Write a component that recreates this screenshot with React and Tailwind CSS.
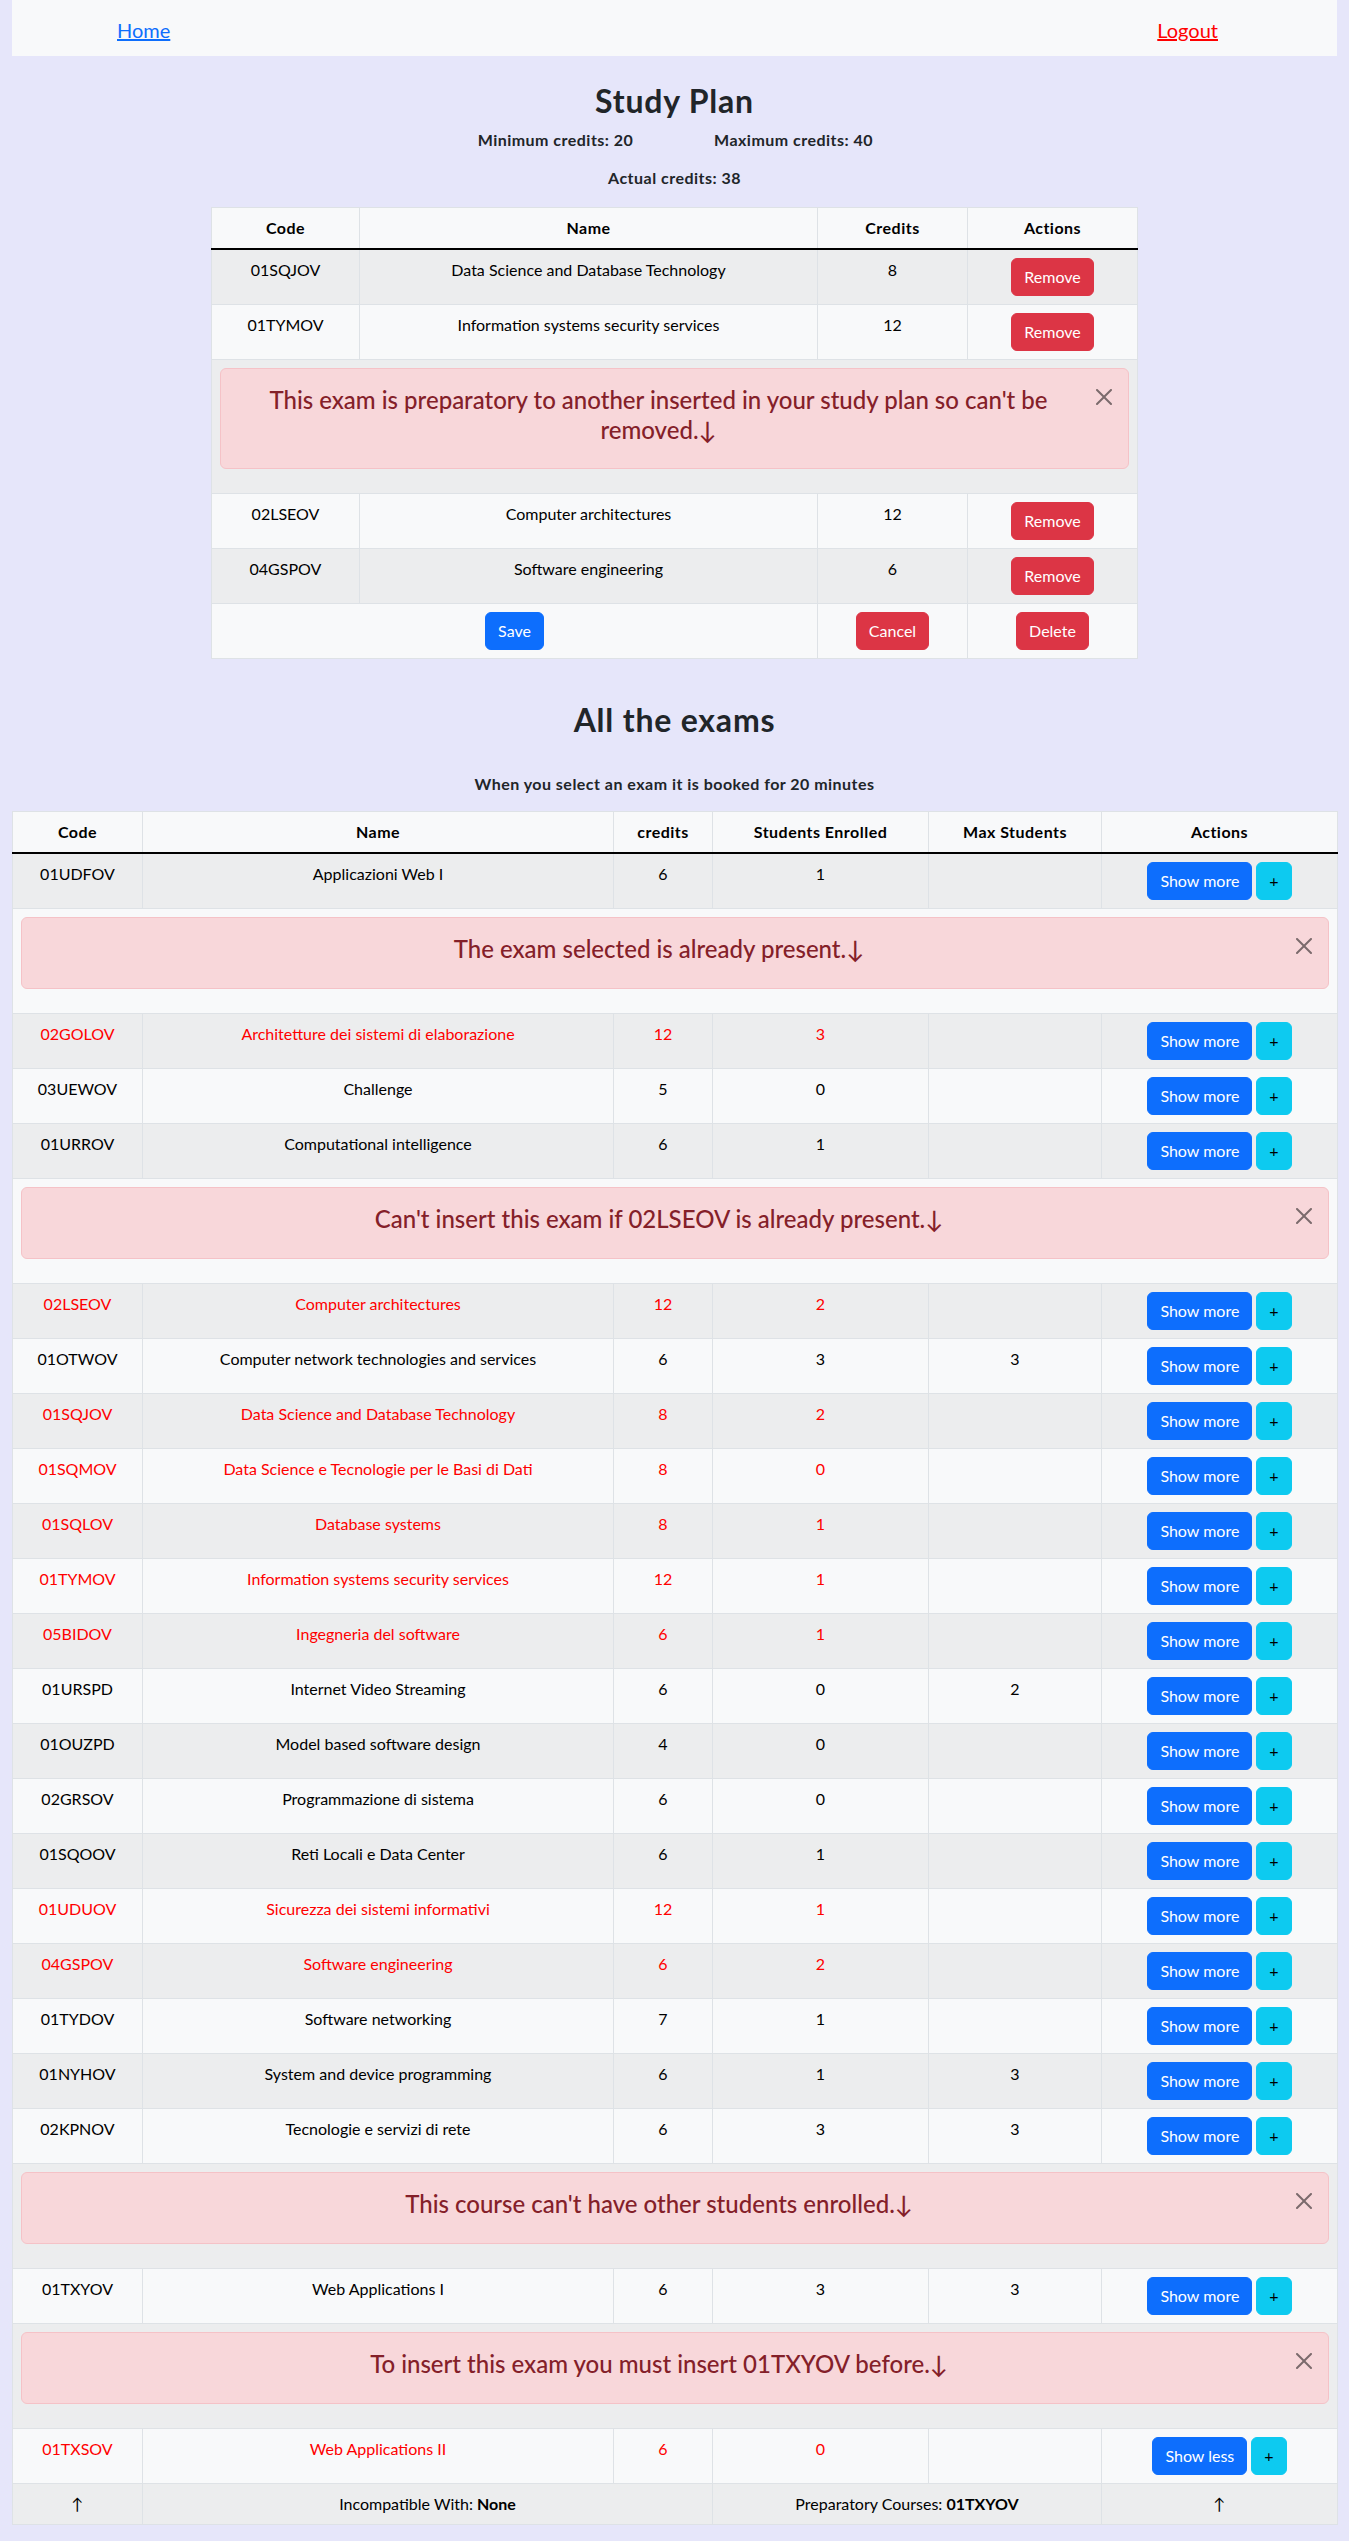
import React from 'react';

const exams = [
  { code: '01UDFOV', name: 'Applicazioni Web I', credits: 6, enrolled: 1, max: '', red: false },
  { alert: 'The exam selected is already present.↓' },
  { code: '02GOLOV', name: 'Architetture dei sistemi di elaborazione', credits: 12, enrolled: 3, max: '', red: true },
  { code: '03UEWOV', name: 'Challenge', credits: 5, enrolled: 0, max: '', red: false },
  { code: '01URROV', name: 'Computational intelligence', credits: 6, enrolled: 1, max: '', red: false },
  { alert: "Can't insert this exam if 02LSEOV is already present.↓" },
  { code: '02LSEOV', name: 'Computer architectures', credits: 12, enrolled: 2, max: '', red: true },
  { code: '01OTWOV', name: 'Computer network technologies and services', credits: 6, enrolled: 3, max: 3, red: false },
  { code: '01SQJOV', name: 'Data Science and Database Technology', credits: 8, enrolled: 2, max: '', red: true },
  { code: '01SQMOV', name: 'Data Science e Tecnologie per le Basi di Dati', credits: 8, enrolled: 0, max: '', red: true },
  { code: '01SQLOV', name: 'Database systems', credits: 8, enrolled: 1, max: '', red: true },
  { code: '01TYMOV', name: 'Information systems security services', credits: 12, enrolled: 1, max: '', red: true },
  { code: '05BIDOV', name: 'Ingegneria del software', credits: 6, enrolled: 1, max: '', red: true },
  { code: '01URSPD', name: 'Internet Video Streaming', credits: 6, enrolled: 0, max: 2, red: false },
  { code: '01OUZPD', name: 'Model based software design', credits: 4, enrolled: 0, max: '', red: false },
  { code: '02GRSOV', name: 'Programmazione di sistema', credits: 6, enrolled: 0, max: '', red: false },
  { code: '01SQOOV', name: 'Reti Locali e Data Center', credits: 6, enrolled: 1, max: '', red: false },
  { code: '01UDUOV', name: 'Sicurezza dei sistemi informativi', credits: 12, enrolled: 1, max: '', red: true },
  { code: '04GSPOV', name: 'Software engineering', credits: 6, enrolled: 2, max: '', red: true },
  { code: '01TYDOV', name: 'Software networking', credits: 7, enrolled: 1, max: '', red: false },
  { code: '01NYHOV', name: 'System and device programming', credits: 6, enrolled: 1, max: 3, red: false },
  { code: '02KPNOV', name: 'Tecnologie e servizi di rete', credits: 6, enrolled: 3, max: 3, red: false },
  { alert: "This course can't have other students enrolled.↓" },
  { code: '01TXYOV', name: 'Web Applications I', credits: 6, enrolled: 3, max: 3, red: false },
  { alert: 'To insert this exam you must insert 01TXYOV before.↓' },
  { code: '01TXSOV', name: 'Web Applications II', credits: 6, enrolled: 0, max: '', red: true, less: true },
];

const plan = [
  { code: '01SQJOV', name: 'Data Science and Database Technology', credits: 8 },
  { code: '01TYMOV', name: 'Information systems security services', credits: 12 },
  { alert: "This exam is preparatory to another inserted in your study plan so can't be removed.↓" },
  { code: '02LSEOV', name: 'Computer architectures', credits: 12 },
  { code: '04GSPOV', name: 'Software engineering', credits: 6 },
];

const rowCls = 'odd:bg-[#ecedee] even:bg-[#f8f9fa]';
const tdCls = 'border border-[#dee2e6] px-2 py-2 text-center align-top text-[16px] leading-6';
const thCls = 'border border-[#dee2e6] border-b-2 border-b-black px-2 py-2 text-center align-top text-[16px] leading-6 font-bold tracking-[0.03em] text-black';

const btnBase = 'inline-block rounded-[6px] border px-3 py-[6px] text-[16px] leading-6 align-top';
const btnPrimary = btnBase + ' border-[#0d6efd] bg-[#0d6efd] text-white';
const btnDanger = btnBase + ' border-[#dc3545] bg-[#dc3545] text-white';
const btnInfo = btnBase + ' border-[#0dcaf0] bg-[#0dcaf0] text-black';

function CloseIcon() {
  return (
    <svg className="block h-4 w-4" viewBox="0 0 16 16">
      <path
        fill="#000"
        d="M.293.293a1 1 0 0 1 1.414 0L8 6.586 14.293.293a1 1 0 1 1 1.414 1.414L9.414 8l6.293 6.293a1 1 0 0 1-1.414 1.414L8 9.414l-6.293 6.293a1 1 0 0 1-1.414-1.414L6.586 8 .293 1.707a1 1 0 0 1 0-1.414z"
      />
    </svg>
  );
}

function Alert({ children, twoLine }) {
  return (
    <div className="relative mb-4 rounded-[6px] border border-[#f5c2c7] bg-[#f8d7da] p-4 pr-12 text-[#842029]">
      <div className={(twoLine ? 'leading-[29.5px]' : 'leading-[30px]') + ' mb-2 text-center text-[24px] font-medium'}>{children}</div>
      <button type="button" className="absolute right-0 top-0 px-4 py-5 opacity-50">
        <CloseIcon />
      </button>
    </div>
  );
}

export default function App() {
  return (
    <div className="min-h-screen bg-[#e6e6fa] px-3 pb-4 font-[Lato,'Liberation_Sans',sans-serif] text-[16px] leading-6 text-[#212529]">
      <nav className="flex h-[56px] items-center justify-between bg-[#f8f9fa] pl-[105px] pr-[119px] pt-[3px]">
        <a href="#" className="text-[20px] leading-[30px] text-[#0d6efd] underline">Home</a>
        <a href="#" className="text-[20px] leading-[30px] text-[#ff0000] underline">Logout</a>
      </nav>

      <h2 className="mt-[26px] text-center text-[32px] font-bold leading-[1.2] tracking-[0.025em] text-[#212529]">Study Plan</h2>
      <div className="mt-[8px] flex justify-center font-bold tracking-[0.03em]">
        <div className="w-[238px] text-center">Minimum credits: 20</div>
        <div className="w-[238px] text-center">Maximum credits: 40</div>
      </div>
      <div className="mt-[14px] text-center font-bold tracking-[0.03em]">Actual credits: 38</div>

      <table className="mx-auto mt-[17px] w-[926px] table-fixed border-collapse border border-[#dee2e6] text-black">
        <colgroup>
          <col className="w-[148px]" />
          <col className="w-[458px]" />
          <col className="w-[150px]" />
          <col className="w-[170px]" />
        </colgroup>
        <thead>
          <tr className="bg-[#f8f9fa]">
            <th className={thCls}>Code</th>
            <th className={thCls}>Name</th>
            <th className={thCls}>Credits</th>
            <th className={thCls}>Actions</th>
          </tr>
        </thead>
        <tbody>
          {plan.map((p, i) =>
            p.alert ? (
              <tr key={i} className={rowCls}>
                <td colSpan={4} className="border border-[#dee2e6] px-2 pb-2 pt-2">
                  <Alert twoLine>{p.alert}</Alert>
                </td>
              </tr>
            ) : (
              <tr key={i} className={rowCls}>
                <td className={tdCls}>{p.code}</td>
                <td className={tdCls}>{p.name}</td>
                <td className={tdCls}>{p.credits}</td>
                <td className={tdCls}>
                  <button type="button" className={btnDanger}>Remove</button>
                </td>
              </tr>
            )
          )}
          <tr className={rowCls}>
            <td colSpan={2} className={tdCls}>
              <button type="button" className={btnPrimary}>Save</button>
            </td>
            <td className={tdCls}>
              <button type="button" className={btnDanger}>Cancel</button>
            </td>
            <td className={tdCls}>
              <button type="button" className={btnDanger}>Delete</button>
            </td>
          </tr>
        </tbody>
      </table>

      <h2 className="mt-[42px] text-center text-[32px] font-bold leading-[1.2] tracking-[0.025em] text-[#212529]">All the exams</h2>
      <div className="mt-[32px] text-center font-bold tracking-[0.03em]">When you select an exam it is booked for 20 minutes</div>

      <table className="mt-[15px] w-full table-fixed border-collapse border border-[#dee2e6] text-black">
        <colgroup>
          <col className="w-[130px]" />
          <col className="w-[471px]" />
          <col className="w-[99px]" />
          <col className="w-[216px]" />
          <col className="w-[173px]" />
          <col className="w-[236px]" />
        </colgroup>
        <thead>
          <tr className="bg-[#f8f9fa]">
            <th className={thCls}>Code</th>
            <th className={thCls}>Name</th>
            <th className={thCls}>credits</th>
            <th className={thCls}>Students Enrolled</th>
            <th className={thCls}>Max Students</th>
            <th className={thCls}>Actions</th>
          </tr>
        </thead>
        <tbody>
          {exams.map((e, i) =>
            e.alert ? (
              <tr key={i} className={rowCls}>
                <td colSpan={6} className="border border-[#dee2e6] px-2 pb-2 pt-2">
                  <Alert>{e.alert}</Alert>
                </td>
              </tr>
            ) : (
              <tr key={i} className={rowCls}>
                <td className={tdCls + (e.red ? ' text-[#ff0000]' : '')}>{e.code}</td>
                <td className={tdCls + (e.red ? ' text-[#ff0000]' : '')}>{e.name}</td>
                <td className={tdCls + (e.red ? ' text-[#ff0000]' : '')}>{e.credits}</td>
                <td className={tdCls + (e.red ? ' text-[#ff0000]' : '')}>{e.enrolled}</td>
                <td className={tdCls}>{e.max}</td>
                <td className={tdCls}>
                  <button type="button" className={btnPrimary}>{e.less ? 'Show less' : 'Show more'}</button>
                  <button type="button" className={btnInfo + ' ml-1'}>+</button>
                </td>
              </tr>
            )
          )}
          <tr className={rowCls}>
            <td className={tdCls}>↑</td>
            <td colSpan={2} className={tdCls}>
              Incompatible With: <b>None</b>
            </td>
            <td colSpan={2} className={tdCls}>
              Preparatory Courses: <b>01TXYOV</b>
            </td>
            <td className={tdCls}>↑</td>
          </tr>
        </tbody>
      </table>
    </div>
  );
}
